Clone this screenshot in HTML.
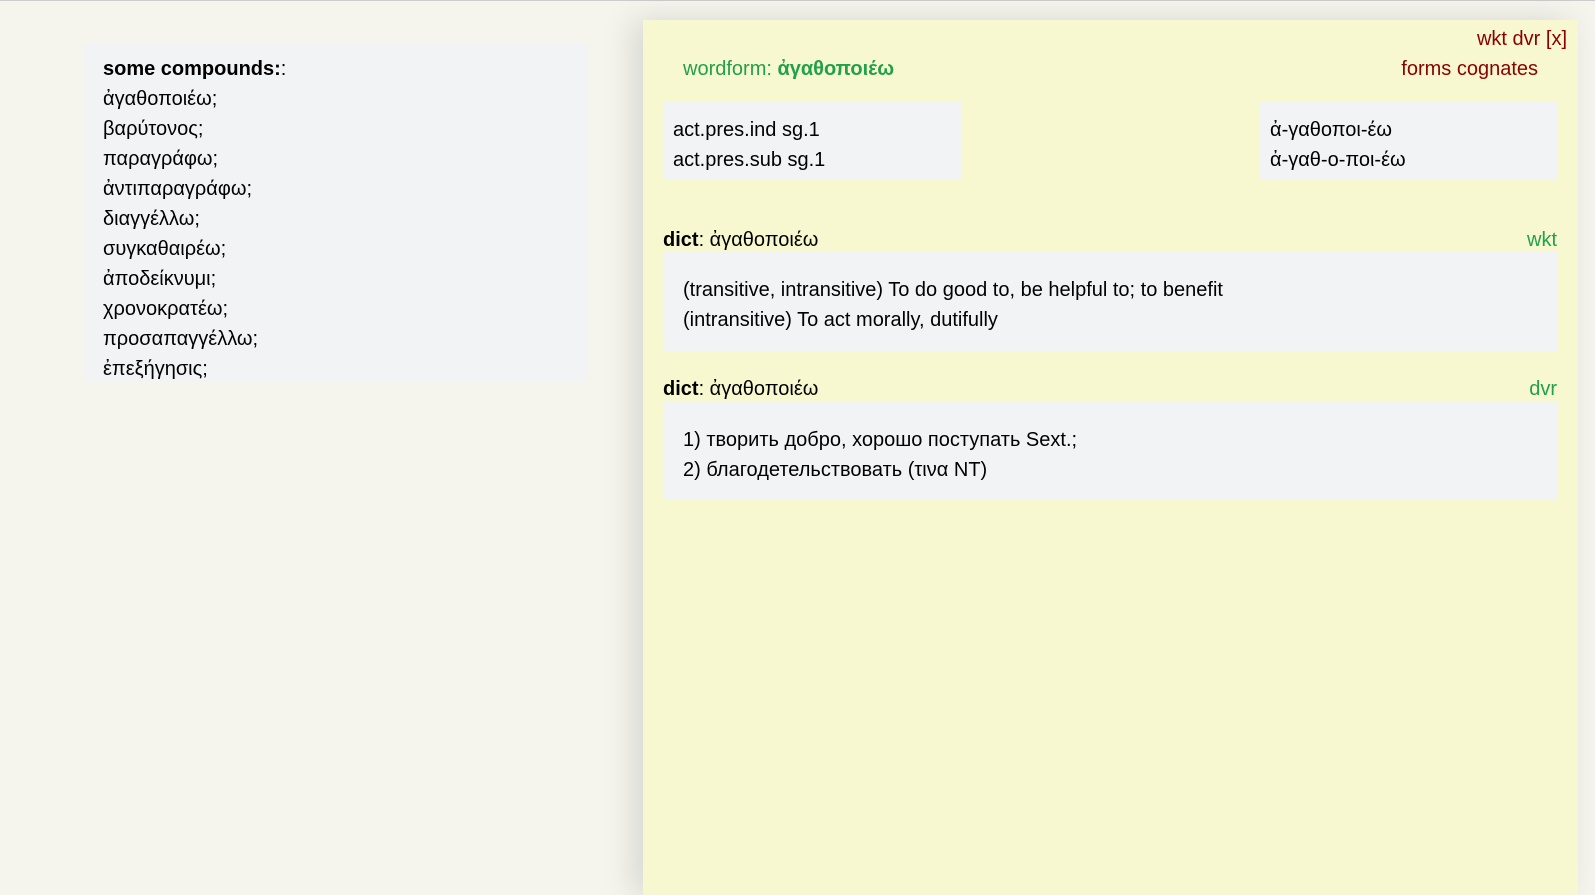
<!DOCTYPE html>
<html><head><meta charset="utf-8"><style>
html,body{margin:0;padding:0;width:1595px;height:895px;overflow:hidden;background:#f5f5ee;font-family:"Liberation Sans","DejaVu Sans",sans-serif;font-size:20px;color:#000}
.top{position:absolute;left:0;top:0;width:1595px;height:1px;background:#ccc}
.lb{position:absolute;left:84px;top:43px;width:504px;height:338px;background:#f2f3f5}
.lb div{position:absolute;left:19px;white-space:nowrap;line-height:1}
.rp{position:absolute;left:643px;top:20px;width:935px;height:875px;background:#f8f8d0;box-shadow:-10px 0 30px rgba(0,0,0,0.12)}
.a{position:absolute;white-space:nowrap;line-height:1}
.red{color:#8b0000}.grn{color:#22a04a}
.box{position:absolute;background:#f2f3f5}
</style></head><body>
<div class="top"></div>
<div class="lb">
<div style="top:16px"><b>some compounds:</b>:</div>
<div style="top:46px">ἀγαθοποιέω;</div>
<div style="top:76px">βαρύτονος;</div>
<div style="top:106px">παραγράφω;</div>
<div style="top:136px">ἀντιπαραγράφω;</div>
<div style="top:166px">διαγγέλλω;</div>
<div style="top:196px">συγκαθαιρέω;</div>
<div style="top:226px">ἀποδείκνυμι;</div>
<div style="top:256px">χρονοκρατέω;</div>
<div style="top:286px">προσαπαγγέλλω;</div>
<div style="top:316px">ἐπεξήγησις;</div>
</div>
<div class="rp">
<div class="a red" style="right:11px;top:9px">wkt dvr [x]</div>
<div class="a grn" style="left:40px;top:39px">wordform: <b>ἀγαθοποιέω</b></div>
<div class="a red" style="right:40px;top:39px">forms cognates</div>
<div class="box" style="left:20px;top:82px;width:298px;height:78px"></div>
<div class="box" style="left:617px;top:82px;width:297px;height:78px"></div>
<div class="a" style="left:30px;top:100px">act.pres.ind sg.1</div>
<div class="a" style="left:30px;top:130px">act.pres.sub sg.1</div>
<div class="a" style="left:627px;top:100px">ἀ-γαθοποι-έω</div>
<div class="a" style="left:627px;top:130px">ἀ-γαθ-ο-ποι-έω</div>
<div class="a" style="left:20px;top:210px"><b>dict</b>: ἀγαθοποιέω</div>
<div class="a grn" style="right:21px;top:210px">wkt</div>
<div class="box" style="left:20px;top:232px;width:894px;height:99px"></div>
<div class="a" style="left:40px;top:260px">(transitive, intransitive) To do good to, be helpful to; to benefit</div>
<div class="a" style="left:40px;top:290px">(intransitive) To act morally, dutifully</div>
<div class="a" style="left:20px;top:359px"><b>dict</b>: ἀγαθοποιέω</div>
<div class="a grn" style="right:21px;top:359px">dvr</div>
<div class="box" style="left:20px;top:382px;width:894px;height:98px"></div>
<div class="a" style="left:40px;top:410px">1) творить добро, хорошо поступать Sext.;</div>
<div class="a" style="left:40px;top:440px">2) благодетельствовать (τινα NT)</div>
</div>
</body></html>
